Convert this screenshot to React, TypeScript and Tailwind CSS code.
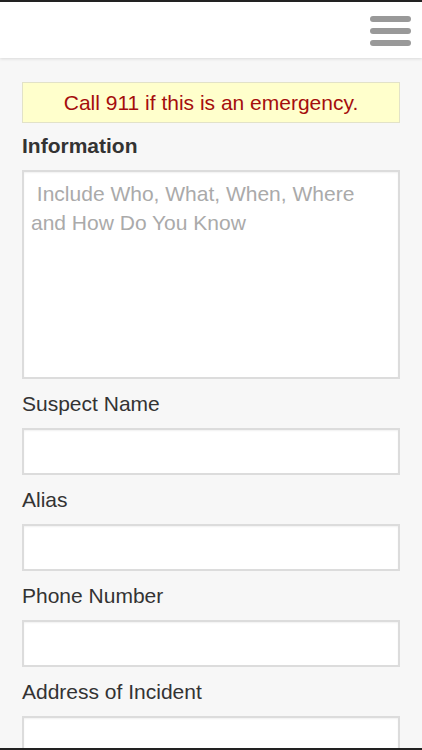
import React from "react";

const fields = ["Suspect Name", "Alias", "Phone Number", "Address of Incident"];

const App: React.FC = () => {
	return (
		<div
			className="flex h-[750px] flex-col overflow-hidden border-y-2 border-[#222] bg-[#f7f7f7] text-[#333]"
			style={{ fontFamily: '"Liberation Sans", Arial, sans-serif' }}
		>
			<header className="flex h-[56px] shrink-0 items-center justify-end bg-white pr-[11px] shadow-[0_1px_3px_rgba(0,0,0,0.12)]">
				<div className="flex w-[41px] flex-col gap-[6px] pt-[2px]">
					<span className="h-[6px] rounded-full bg-[#999]" />
					<span className="h-[6px] rounded-full bg-[#999]" />
					<span className="h-[6px] rounded-full bg-[#999]" />
				</div>
			</header>

			<main className="flex flex-col px-[22px] pt-[24px]">
				<div className="flex h-[41px] items-center justify-center border-[1.5px] border-[#e2e2c8] bg-[#ffffcc] text-[21px] text-[#a50d0d]">
					Call 911 if this is an emergency.
				</div>

				<label className="mt-[11px] text-[21px] font-bold leading-[24px] text-[#333]">
					Information
				</label>
				<textarea
					className="mt-[12px] h-[209px] shrink-0 resize-none border-2 border-[#dcdcdc] bg-white px-[7px] py-[7px] text-[21px] leading-[29px] text-[#333] shadow-[inset_0_1px_2px_rgba(0,0,0,0.06)] outline-none placeholder:text-[#aaa]"
					placeholder=" Include Who, What, When, Where and How Do You Know"
				/>

				{fields.map((f) => (
					<div key={f} className="flex flex-col">
						<label className="mt-[13px] text-[21px] leading-[24px] text-[#333]">
							{f}
						</label>
						<input
							className="mt-[12px] h-[47px] shrink-0 border-2 border-[#dcdcdc] bg-white px-[8px] text-[21px] shadow-[inset_0_1px_2px_rgba(0,0,0,0.06)] outline-none"
							type="text"
						/>
					</div>
				))}
			</main>
		</div>
	);
};

export default App;
